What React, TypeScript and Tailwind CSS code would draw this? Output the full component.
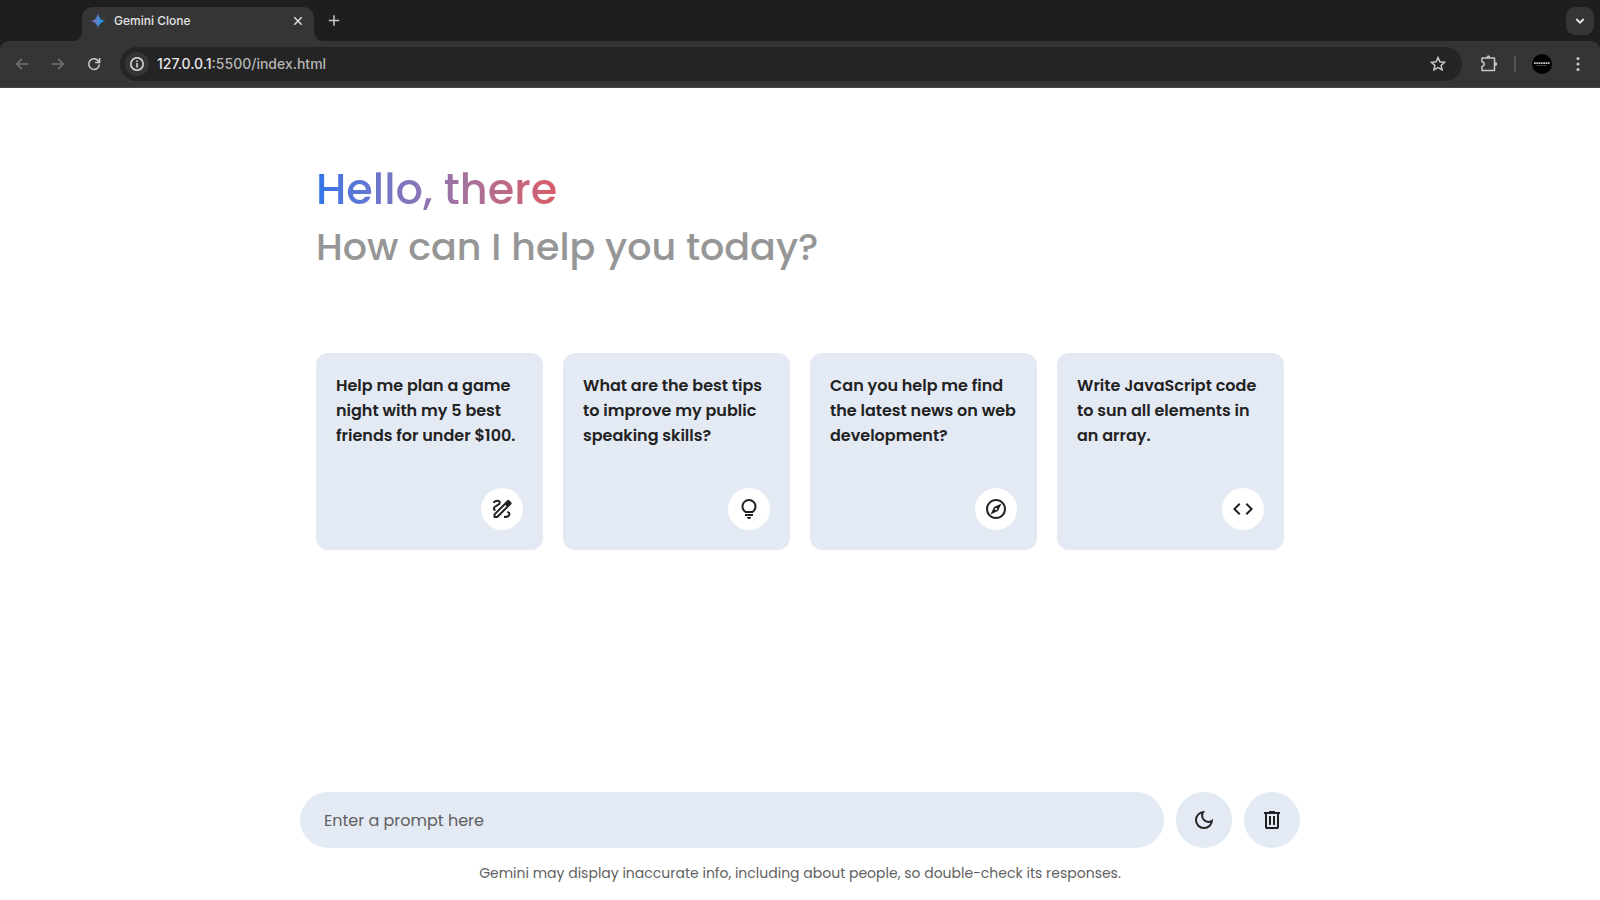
import type { ReactNode } from "react";

const PATHS = {
  bulb: "M480-80q-33 0-56.5-23.5T400-160h160q0 33-23.5 56.5T480-80ZM320-200v-80h320v80H320Zm10-120q-69-41-109.5-110T180-580q0-125 87.5-212.5T480-880q125 0 212.5 87.5T780-580q0 81-40.5 150T630-320H330Zm24-80h252q45-32 69.5-79T700-580q0-92-64-156t-156-64q-92 0-156 64t-64 156q0 54 24.5 101t69.5 79Z",
  explore:
    "m260-260 300-140 140-300-300 140-140 300Zm220-175q-19 0-32-13t-13-32q0-19 13-32t32-13q19 0 32 13t13 32q0 19-13 32t-32 13Zm0 355q-83 0-156-31.5T197-197q-54-54-85.5-127T80-480q0-83 31.5-156T197-763q54-54 127-85.5T480-880q83 0 156 31.5T763-763q54 54 85.5 127T880-480q0 83-31.5 156T763-197q-54 54-127 85.5T480-80Zm0-80q134 0 227-93t93-227q0-134-93-227t-227-93q-134 0-227 93t-93 227q0 134 93 227t227 93Z",
  code: "M320-240 80-480l240-240 57 57-184 184 183 183-56 56Zm320 0-57-57 184-184-183-183 56-56 240 240-240 240Z",
  moon: "M480-120q-150 0-255-105T120-480q0-150 105-255t255-105q14 0 27.5 1t26.5 3q-41 29-65.5 75.5T444-660q0 90 63 153t153 63q55 0 101-24.5t75-65.5q2 13 3 26.5t1 27.5q0 150-105 255T480-120Zm0-80q88 0 158-48.5T740-375q-20 5-40 8t-40 3q-123 0-209.5-86.5T364-660q0-20 3-40t8-40q-78 32-126.5 102T200-480q0 116 82 198t198 82Z",
  trash:
    "M280-120q-33 0-56.5-23.5T200-200v-520h-40v-80h200v-40h240v40h200v80h-40v520q0 33-23.5 56.5T680-120H280Zm400-600H280v520h400v-520ZM360-280h80v-360h-80v360Zm160 0h80v-360h-80v360Z",
};

function Symbol({ d }: { d: string }) {
  return (
    <svg viewBox="0 -960 960 960" className="size-6" fill="currentColor" aria-hidden="true">
      <path d={d} fillRule="evenodd" />
    </svg>
  );
}

function DrawIcon() {
  return (
    <svg viewBox="0 0 24 24" className="size-6" fill="none" stroke="currentColor" strokeWidth="2" aria-hidden="true">
      <path d="M4.500 20v-2.600L18 4l2.600 2.600L7.200 20z" strokeLinejoin="round" />
      <path d="M14.400 7 17.400 3.800q1.200-1.200 2.400 0l1 1q1.200 1.200 0 2.400l-3.200 3z" fill="currentColor" stroke="none" />
      <path d="M3.500 5.700C5 3.400 9.800 2.800 9.800 5.700c0 2.700-6 3-6 5.700 0 1 .7 1.500 1.700 1.900" />
      <path d="M14 20c2.800 0 5.500-.8 5.500-2.900 0-1-.7-1.700-2.200-2.200" />
    </svg>
  );
}

const SUGGESTIONS: { text: string; icon: ReactNode }[] = [
  { text: "Help me plan a game night with my 5 best friends for under $100.", icon: <DrawIcon /> },
  { text: "What are the best tips to improve my public speaking skills?", icon: <Symbol d={PATHS.bulb} /> },
  { text: "Can you help me find the latest news on web development?", icon: <Symbol d={PATHS.explore} /> },
  { text: "Write JavaScript code to sun all elements in an array.", icon: <Symbol d={PATHS.code} /> },
];

function Line({ d, className }: { d: string; className: string }) {
  return (
    <svg viewBox="0 0 16 16" className={className} fill="none" stroke="currentColor" strokeWidth="1.5" aria-hidden="true">
      <path d={d} />
    </svg>
  );
}

function TabStrip() {
  return (
    <div className="flex h-[41px] items-end bg-[#1e1e1e] pr-1.5 pl-[72px]">
      <svg viewBox="0 0 10 10" className="size-2.5 text-[#353535]" fill="currentColor" aria-hidden="true">
        <path d="M10 0v10H0Q10 10 10 0Z" />
      </svg>
      <div className="flex h-[34px] w-[232px] items-center rounded-t-[10px] bg-[#353535] px-2 pb-1.5">
        <svg viewBox="0 0 16 16" className="size-4" aria-hidden="true">
          <defs>
            <linearGradient id="spark" x1="0" y1="0" x2="1" y2="0">
              <stop offset="0" stopColor="#9168c0" />
              <stop offset=".45" stopColor="#5684d1" />
              <stop offset=".75" stopColor="#1b94e3" />
            </linearGradient>
          </defs>
          <path d="M8 .5Q9 7 15.500 8 9 9 8 15.500 7 9 .5 8 7 7 8 .5Z" fill="url(#spark)" />
        </svg>
        <span className="ml-2 flex-1 text-xs font-medium text-[#e3e3e3]">Gemini Clone</span>
        <button aria-label="Close tab" className="text-[#dedede]">
          <Line d="M4.300 4.300l7.400 7.400M11.700 4.300l-7.400 7.400" className="size-4" />
        </button>
      </div>
      <svg viewBox="0 0 10 10" className="size-2.5 text-[#353535]" fill="currentColor" aria-hidden="true">
        <path d="M0 0v10H10Q0 10 0 0Z" />
      </svg>
      <button aria-label="New tab" className="mb-3 ml-0.5 text-[#c7c7c7]">
        <Line d="M8 2.200v10.500M2.800 7.400h10.500" className="size-4" />
      </button>
      <button
        aria-label="Search tabs"
        className="mb-1.5 ml-auto flex size-7 items-center justify-center rounded-[9px] bg-[#353535] text-[#e8e8e8]"
      >
        <svg viewBox="0 0 16 16" className="size-4" fill="none" stroke="currentColor" strokeWidth="1.800" aria-hidden="true">
          <path d="M4.300 6 8 9.700l3.700-3.700" />
        </svg>
      </button>
    </div>
  );
}

function Toolbar() {
  return (
    <div className="bg-[#1e1e1e]">
      <div className="flex h-[47px] items-center rounded-t-[9px] border-b border-[#454545] bg-[#353535] px-3.5">
        <button aria-label="Back" className="text-[#757575]">
          <Line d="M14 8H3M8 2.800 2.800 8 8 13.200" className="size-4" />
        </button>
        <button aria-label="Forward" className="ml-5 text-[#757575]">
          <Line d="M2 8h11M8 2.800 13.200 8 8 13.200" className="size-4" />
        </button>
        <button aria-label="Reload" className="ml-5 text-[#d0d0d0]">
          <Line d="M13.300 8.500A5.300 5.300 0 1 1 12 4.600L13.600 6.200M13.600 2v4.500H9.200" className="size-4" />
        </button>
        <div className="ml-[18px] flex h-[34px] flex-1 items-center rounded-full bg-[#242424] pr-4 pl-[5px]">
          <button
            aria-label="Site information"
            className="flex size-6 items-center justify-center rounded-full bg-[#353535] text-[#e0e0e0]"
          >
            <Line d="M8 1.800a6.200 6.200 0 1 0 0 12.400A6.200 6.200 0 0 0 8 1.800M8 7v4.500M8 4.400v1.600" className="size-4" />
          </button>
          <label htmlFor="address" className="ml-2 text-sm font-medium text-[#e8e8e8]">
            127.0.0.1
          </label>
          <input
            id="address"
            defaultValue=":5500/index.html"
            className="min-w-0 flex-1 bg-transparent text-sm font-medium text-[#b5b5b5] outline-none"
          />
          <button aria-label="Bookmark" className="text-[#c7c7c7]">
            <Line
              d="M8 1.600l1.900 4.200 4.600.5-3.400 3.100 1 4.500L8 11.600l-4.100 2.300 1-4.500L1.500 6.300l4.600-.5z"
              className="size-4"
            />
          </button>
        </div>
        <button aria-label="Extensions" className="ml-[18px] text-[#c7c7c7]">
          <svg viewBox="0 0 18 18" className="size-[18px]" fill="none" stroke="currentColor" strokeWidth="1.500" aria-hidden="true">
            <path d="M2 3h12.500v12.500H2v-4.100q2.200-.3 2.200-2.300T2 7z" strokeLinejoin="round" />
            <path d="M6.500 2.800q0-2.500 1.900-2.500t1.900 2.500zM15 7.100q2.200 0 2.200 1.900T15 10.900z" fill="currentColor" stroke="none" />
          </svg>
        </button>
        <span className="mx-4 h-4 w-0.5 bg-[#555]" />
        <button
          aria-label="Profile"
          className="flex size-5 items-center justify-center rounded-full bg-black text-white"
        >
          <svg viewBox="0 0 20 20" className="size-5" stroke="currentColor" aria-hidden="true">
            <path d="M2 9.200h16" strokeWidth="1.800" strokeDasharray="1.800 .5" opacity=".75" />
            <path d="M5 11.500h10" strokeWidth=".8" strokeDasharray="1 .7" opacity=".5" />
          </svg>
        </button>
        <button aria-label="Menu" className="ml-[18px] text-[#c7c7c7]">
          <svg viewBox="0 0 16 16" className="size-4" fill="currentColor" aria-hidden="true">
            <circle cx="8" cy="2.500" r="1.600" />
            <circle cx="8" cy="8" r="1.600" />
            <circle cx="8" cy="13.500" r="1.600" />
          </svg>
        </button>
      </div>
    </div>
  );
}

export default function App() {
  return (
    <div className="flex min-h-screen flex-col bg-white font-['Poppins','Inter',sans-serif] text-[#222]">
      <header className="font-['Inter',sans-serif]">
        <TabStrip />
        <Toolbar />
      </header>
      <main className="mx-auto w-full max-w-[1000px] flex-1 px-4 pt-[72px]">
        <h1 className="w-fit bg-linear-to-r from-[#2f75ea] to-[#d95b66] bg-clip-text text-[43px] leading-[58px] font-medium text-transparent">
          Hello, there
        </h1>
        <p className="text-[38px] leading-[58px] font-medium text-[#969696]">How can I help you today?</p>
        <ul className="mt-[77px] grid grid-cols-4 gap-5">
          {SUGGESTIONS.map((item) => (
            <li key={item.text}>
              <button className="flex min-h-[197px] w-full flex-col items-end justify-between rounded-xl bg-[#e4eaf4] p-5 text-left">
                <span className="w-full text-base leading-[25px] font-semibold">{item.text}</span>
                <span className="flex size-[42px] items-center justify-center rounded-full bg-white">{item.icon}</span>
              </button>
            </li>
          ))}
        </ul>
      </main>
      <footer className="mx-auto w-full max-w-[1000px] pb-[17px]">
        <form className="flex gap-3" onSubmit={(event) => event.preventDefault()}>
          <input
            aria-label="Prompt"
            placeholder="Enter a prompt here"
            className="h-14 min-w-0 flex-1 rounded-full bg-[#e4eaf4] px-6 text-base outline-none placeholder:text-[#5f5f5f]"
          />
          <button type="button" aria-label="Dark mode" className="flex size-14 items-center justify-center rounded-full bg-[#e4eaf4]">
            <Symbol d={PATHS.moon} />
          </button>
          <button type="button" aria-label="Delete chats" className="flex size-14 items-center justify-center rounded-full bg-[#e4eaf4]">
            <Symbol d={PATHS.trash} />
          </button>
        </form>
        <p className="mt-[15px] text-center text-sm text-[#5f5f5f]">
          Gemini may display inaccurate info, including about people, so double-check its responses.
        </p>
      </footer>
    </div>
  );
}
